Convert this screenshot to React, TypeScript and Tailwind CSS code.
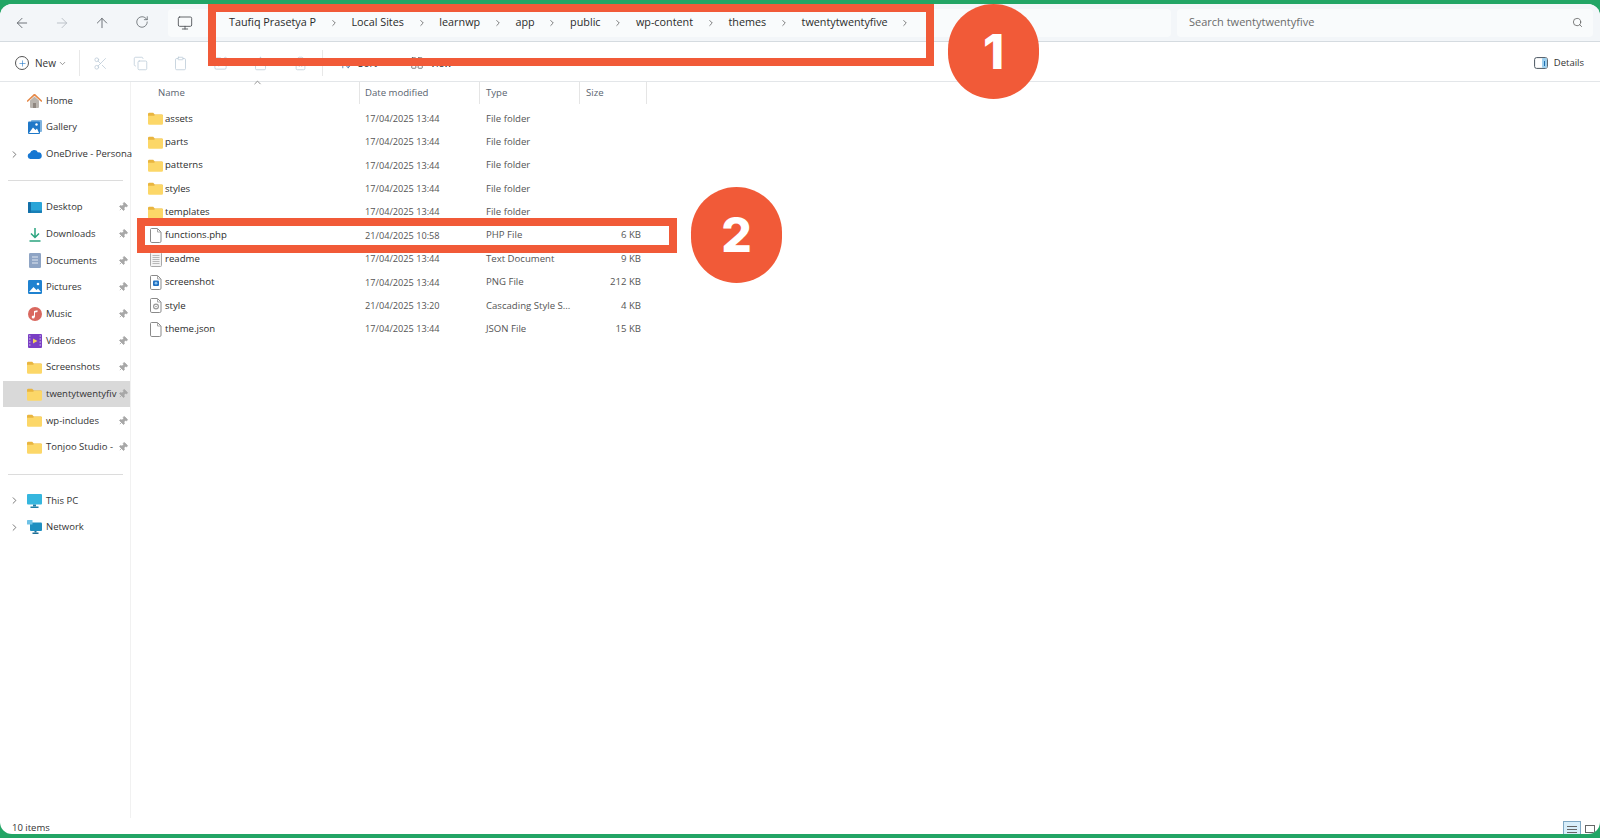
import {
  ArrowLeft,
  ArrowRight,
  ArrowUp,
  ArrowUpDown,
  ChevronDown,
  ChevronRight,
  ChevronUp,
  Clipboard,
  Copy,
  LayoutGrid,
  Monitor,
  Pin,
  Plus,
  RotateCw,
  Scissors,
  Search,
  Share,
  SquarePen,
  Trash2,
} from "lucide-react";
import React from "react";

const Folder = () => (
  <svg width="15" height="13" viewBox="0 0 15 13" className="shrink-0">
    <path d="M0 2a1.2 1.2 0 0 1 1.2-1.2h4l1.6 1.6h7A1.2 1.2 0 0 1 15 3.6V6H0z" fill="#e9b53f" />
    <path d="M0 3.8h6l1.4-1h6.4A1.2 1.2 0 0 1 15 4v7.6a1.2 1.2 0 0 1-1.2 1.2H1.2A1.2 1.2 0 0 1 0 11.6z" fill="#fcd768" />
  </svg>
);

const DocShell = ({ children }: { children?: React.ReactNode }) => (
  <svg width="14" height="15" viewBox="0 0 14 15" className="shrink-0">
    <path d="M2.5.5h6l3.5 3.5v9.2a1.3 1.3 0 0 1-1.3 1.3H2.8a1.3 1.3 0 0 1-1.3-1.3V1.5a1 1 0 0 1 1-1z" fill="#fff" stroke="#8a8a8a" />
    <path d="M8.5.5V4H12" fill="none" stroke="#a8a8a8" />
    {children}
  </svg>
);

const fileIcons: Record<string, React.ReactNode> = {
  folder: <Folder />,
  plain: <DocShell />,
  text: (
    <svg width="14" height="15" viewBox="0 0 14 15" className="shrink-0">
      <rect x="1.5" y=".5" width="11" height="14" rx="1" fill="#f3f3f3" stroke="#a8a8a8" />
      <path d="M3.5 3.5h7M3.5 5.5h7M3.5 7.5h7M3.5 9.5h7M3.5 11.5h7" stroke="#b8b8b8" />
    </svg>
  ),
  image: (
    <DocShell>
      <rect x="4" y="5.5" width="6" height="5.5" rx="1" fill="#1f6fc0" />
      <circle cx="7" cy="8.2" r="1.4" fill="#8cc4ee" />
    </DocShell>
  ),
  css: (
    <DocShell>
      <circle cx="7" cy="8.5" r="2.4" fill="none" stroke="#9a9a9a" strokeWidth="1.2" />
      <circle cx="7" cy="8.5" r=".8" fill="#9a9a9a" />
    </DocShell>
  ),
};

const Home = () => (
  <svg width="15" height="14" viewBox="0 0 15 14">
    <path d="M3 6.5V13a1 1 0 0 0 1 1h7a1 1 0 0 0 1-1V6.5L7.5 2.5z" fill="#b9b4ae" />
    <rect x="6" y="9" width="3" height="5" fill="#8f8780" />
    <path d="M.6 7 7.5.6 14.4 7" fill="none" stroke="#e68a4a" strokeWidth="1.7" strokeLinecap="round" />
  </svg>
);

const Gallery = () => (
  <svg width="14" height="14" viewBox="0 0 14 14">
    <rect x="3" y="0" width="11" height="12" rx="1" fill="#7fb3de" />
    <rect x="0" y="1.5" width="12" height="12.5" rx="1" fill="#1f78c8" />
    <path d="M1 13 5 7.5l2.500 2.500L9 8.500l2 4.500z" fill="#fff" />
    <circle cx="8.500" cy="4.500" r="1.200" fill="#fff" />
  </svg>
);

const Cloud = () => (
  <svg width="15" height="10" viewBox="0 0 15 10">
    <path d="M3.400 10A3 3 0 0 1 3 4.100 4.300 4.300 0 0 1 11 3.400 3.300 3.300 0 0 1 11.800 10z" fill="#1677d2" />
  </svg>
);

const Desktop = () => (
  <svg width="14" height="11" viewBox="0 0 14 11">
    <rect width="14" height="11" rx="1" fill="#2aa5d8" />
    <rect width="3" height="11" rx="1" fill="#136fa8" />
    <rect y="8.500" width="14" height="2.500" fill="#136fa8" opacity=".7" />
  </svg>
);

const Downloads = () => (
  <svg width="14" height="15" viewBox="0 0 14 15" fill="none" stroke="#2ba47f" strokeWidth="1.500">
    <path d="M7 1v9M3 6.500 7 10.500l4-4M1.500 14h11" />
  </svg>
);

const Documents = () => (
  <svg width="12" height="15" viewBox="0 0 12 15">
    <rect width="12" height="15" rx="1.200" fill="#8ea4c4" />
    <path d="M3 4h6M3 7h6M3 10h6" stroke="#dfe6f0" />
  </svg>
);

const Pictures = () => (
  <svg width="14" height="14" viewBox="0 0 14 14">
    <rect width="14" height="14" rx="1.200" fill="#1f82d0" />
    <path d="M1 12 5.500 7l3 3 1.500-1.500L13 12z" fill="#fff" />
    <circle cx="10" cy="4" r="1.300" fill="#fff" />
  </svg>
);

const Music = () => (
  <svg width="14" height="14" viewBox="0 0 14 14">
    <circle cx="7" cy="7" r="7" fill="#d9685f" />
    <path d="M6 10V4l3.500-.8V5L7 5.600V10z" fill="#fff" />
    <circle cx="5.200" cy="10" r="1.500" fill="#fff" />
  </svg>
);

const Videos = () => (
  <svg width="14" height="14" viewBox="0 0 14 14">
    <rect width="14" height="14" rx="1" fill="#7a3fc4" />
    <path d="M5 4.500v5l4.500-2.500z" fill="#f2d25c" />
    <path d="M1 2h1.500M1 5h1.500M1 8h1.500M1 11h1.500M11.500 2H13M11.500 5H13M11.500 8H13M11.500 11H13" stroke="#d5c2ee" />
  </svg>
);

const ThisPc = () => (
  <svg width="15" height="14" viewBox="0 0 15 14">
    <rect width="15" height="10.500" rx="1" fill="#35b6de" />
    <rect x="6" y="10.500" width="3" height="2" fill="#1f7ea6" />
    <rect x="3.500" y="12.500" width="8" height="1.500" fill="#1f7ea6" />
  </svg>
);

const Network = () => (
  <svg width="15" height="14" viewBox="0 0 15 14">
    <rect x="3" y="2.500" width="12" height="8.500" rx="1" fill="#1f8fc0" />
    <rect x="0" y="0" width="5.500" height="4.500" rx=".6" fill="#6fc2e6" />
    <rect x="7.500" y="11" width="2" height="1.500" fill="#1f6f96" />
    <rect x="5.500" y="12.500" width="6" height="1.500" fill="#1f6f96" />
  </svg>
);

type NavItem = { label?: string; icon?: React.ReactNode; pin?: boolean; arrow?: boolean; active?: boolean };

const sidebarItems: NavItem[] = [
  { label: "Home", icon: <Home /> },
  { label: "Gallery", icon: <Gallery /> },
  { label: "OneDrive - Persona", icon: <Cloud />, arrow: true },
  {},
  { label: "Desktop", icon: <Desktop />, pin: true },
  { label: "Downloads", icon: <Downloads />, pin: true },
  { label: "Documents", icon: <Documents />, pin: true },
  { label: "Pictures", icon: <Pictures />, pin: true },
  { label: "Music", icon: <Music />, pin: true },
  { label: "Videos", icon: <Videos />, pin: true },
  { label: "Screenshots", icon: <Folder />, pin: true },
  { label: "twentytwentyfiv", icon: <Folder />, pin: true, active: true },
  { label: "wp-includes", icon: <Folder />, pin: true },
  { label: "Tonjoo Studio -", icon: <Folder />, pin: true },
  {},
  { label: "This PC", icon: <ThisPc />, arrow: true },
  { label: "Network", icon: <Network />, arrow: true },
];

const files = [
  { name: "assets", date: "17/04/2025 13:44", type: "File folder", size: "", icon: "folder" },
  { name: "parts", date: "17/04/2025 13:44", type: "File folder", size: "", icon: "folder" },
  { name: "patterns", date: "17/04/2025 13:44", type: "File folder", size: "", icon: "folder" },
  { name: "styles", date: "17/04/2025 13:44", type: "File folder", size: "", icon: "folder" },
  { name: "templates", date: "17/04/2025 13:44", type: "File folder", size: "", icon: "folder" },
  { name: "functions.php", date: "21/04/2025 10:58", type: "PHP File", size: "6 KB", icon: "plain" },
  { name: "readme", date: "17/04/2025 13:44", type: "Text Document", size: "9 KB", icon: "text" },
  { name: "screenshot", date: "17/04/2025 13:44", type: "PNG File", size: "212 KB", icon: "image" },
  { name: "style", date: "21/04/2025 13:20", type: "Cascading Style S...", size: "4 KB", icon: "css" },
  { name: "theme.json", date: "17/04/2025 13:44", type: "JSON File", size: "15 KB", icon: "plain" },
];

const crumbs = ["Taufiq Prasetya P", "Local Sites", "learnwp", "app", "public", "wp-content", "themes", "twentytwentyfive"];

const NavBar = () => (
  <div className="flex h-[38px] shrink-0 items-center gap-[6px] border-b border-[#d5dbe0] bg-[#f3f6f9] pl-[2px] pr-[7px]">
    <div className="flex">
      <div className="flex w-10 justify-center text-[#5a6066]"><ArrowLeft size={16} strokeWidth={1.3} /></div>
      <div className="flex w-10 justify-center text-[#b4bac0]"><ArrowRight size={16} strokeWidth={1.3} /></div>
      <div className="flex w-10 justify-center text-[#5a6066]"><ArrowUp size={16} strokeWidth={1.3} /></div>
      <div className="flex w-10 justify-center text-[#5a6066]"><RotateCw size={14} strokeWidth={1.3} /></div>
    </div>
    <div className="flex h-[28px] flex-1 items-center rounded-[4px] bg-[#f9fbfc] pl-[9px]">
      <Monitor size={16} strokeWidth={1.3} className="text-[#4a4f54]" />
      <div className="ml-[36px] flex items-center gap-[12.7px] text-[10.8px] text-[#2b2b2b]">
        {crumbs.map((c) => (
          <React.Fragment key={c}>
            <span className="whitespace-nowrap">{c}</span>
            <ChevronRight size={10} strokeWidth={1.7} className="text-[#4a4a4a]" />
          </React.Fragment>
        ))}
      </div>
    </div>
    <div className="flex h-[28px] w-[416px] items-center justify-between rounded-[4px] bg-[#f9fbfc] pl-3 pr-[10px] text-[11px] text-[#6b6b6b]">
      <span>Search twentytwentyfive</span>
      <Search size={11} strokeWidth={1.6} className="text-[#555]" />
    </div>
  </div>
);

const CommandBar = () => (
  <div className="flex h-[40px] shrink-0 items-center border-b border-[#e3e6e9] bg-white pl-[15px] pr-4 pt-[3px] text-[10px] text-[#333]">
    <span className="flex h-[14px] w-[14px] items-center justify-center rounded-full border border-[#555]">
      <Plus size={9} strokeWidth={1.6} className="text-[#2277c7]" />
    </span>
    <span className="ml-[6px] w-[21px]">New</span>
    <ChevronDown size={9} className="ml-[2px] text-[#777]" />
    <div className="ml-[12px] h-[26px] w-px bg-[#e8e8e8]" />
    {[Scissors, Copy, Clipboard, SquarePen, Share, Trash2].map((Icon, i) => (
      <div key={i} className="flex w-10 justify-center text-[#b8c8d6]">
        <Icon size={15} strokeWidth={1.2} />
      </div>
    ))}
    <div className="ml-[2px] h-[26px] w-px bg-[#e8e8e8]" />
    <ArrowUpDown size={13} strokeWidth={1.4} className="ml-[16px] text-[#3a6ea5]" />
    <span className="ml-[6px] w-[20px]">Sort</span>
    <LayoutGrid size={14} strokeWidth={1.3} className="ml-[32px] text-[#555]" />
    <span className="ml-[6px]">View</span>
    <div className="ml-auto flex items-center gap-[6px]">
      <svg width="14" height="12" viewBox="0 0 14 12" fill="none">
        <rect x=".6" y=".6" width="12.8" height="10.800" rx="2" stroke="#4a5660" />
        <rect x="8" y="1" width="5" height="10" rx="1" fill="#9fd0ee" />
        <path d="M10.500 4v5" stroke="#1f6fb0" />
      </svg>
      <span className="text-[9.5px]">Details</span>
    </div>
  </div>
);

const Sidebar = () => (
  <div className="w-[131px] shrink-0 border-r border-[#f1f1f1] pl-[3px] pt-[5.5px] text-[9.5px] text-[#333]">
    {sidebarItems.map((item, i) =>
      item.label ? (
        <div key={i} className={`flex h-[26.67px] items-center ${item.active ? "bg-[#d9d9d9]" : ""}`}>
          <div className="flex w-[22px] shrink-0 justify-center text-[#555]">
            {item.arrow && <ChevronRight size={11} strokeWidth={1.7} />}
          </div>
          <div className="ml-[2px] flex w-[15px] shrink-0 justify-center">{item.icon}</div>
          <span className={`ml-1 whitespace-nowrap ${item.pin ? "w-[70px]" : "flex-1"}`}>{item.label}</span>
          {item.pin && <Pin size={10} className="ml-[2px] rotate-45 fill-[#a8a8a8] text-[#a8a8a8]" />}
        </div>
      ) : (
        <div key={i} className="flex h-[26.67px] items-center pl-[5px] pr-[7px]">
          <div className="h-px w-full bg-[#dcdcdc]" />
        </div>
      )
    )}
  </div>
);

const FileList = () => (
  <div className="relative flex-1 text-[9.6px]">
    <ChevronUp size={11} className="absolute left-[121px] top-[-5px] text-[#888]" />
    <div className="flex h-[25px] text-[#5a6470]">
      <div className="flex h-[22px] w-[229px] items-center border-r border-[#e5e5e5] pl-[27px]">Name</div>
      <div className="flex h-[22px] w-[120px] items-center border-r border-[#e5e5e5] pl-[5px]">Date modified</div>
      <div className="flex h-[22px] w-[100px] items-center border-r border-[#e5e5e5] pl-[6px]">Type</div>
      <div className="flex h-[22px] w-[67px] items-center border-r border-[#e5e5e5] pl-[6px]">Size</div>
    </div>
    {files.map((f) => (
      <div key={f.name} className="flex h-[23.4px] items-center pl-[17px]">
        <div className="flex w-[15px] shrink-0 justify-center">{fileIcons[f.icon]}</div>
        <span className="ml-px w-[201px] whitespace-nowrap pl-[1px] text-[#2b2b2b]">{f.name}</span>
        <span className="w-[121px] whitespace-nowrap text-[9.2px] text-[#555]">{f.date}</span>
        <span className="w-[100px] whitespace-nowrap text-[#555]">{f.type}</span>
        <span className="w-[55px] text-right text-[#555]">{f.size}</span>
      </div>
    ))}
  </div>
);

const StatusBar = () => (
  <div className="flex h-[16px] shrink-0 items-end justify-between pl-3 pr-[5px] text-[9.5px] leading-[13px] text-[#333]">
    <span>10 items</span>
    <div className="flex items-end gap-[4px]">
      <div className="flex h-[13px] w-[18px] flex-col items-center justify-end gap-[2px] border border-b-0 border-[#7fa8c4] bg-[#d8eefa] pb-[1px]">
        <div className="h-px w-[10px] bg-[#666]" />
        <div className="h-px w-[10px] bg-[#666]" />
        <div className="h-px w-[10px] bg-[#666]" />
      </div>
      <div className="mb-[1px] h-[8px] w-[10px] border border-[#666]" />
    </div>
  </div>
);

const Callout = ({ n, className }: { n: number; className: string }) => (
  <div className={`absolute flex items-center justify-center rounded-full bg-[#f15a38] font-['Inter',sans-serif] text-[48px] font-extrabold leading-none text-white ${className}`}>
    {n}
  </div>
);

export default function App() {
  return (
    <div className="relative h-[838px] w-[1600px] overflow-hidden bg-[#22a565] py-1 font-['Open_Sans',sans-serif]">
      <div className="flex h-full flex-col overflow-hidden rounded-[12px] bg-white">
        <NavBar />
        <CommandBar />
        <div className="flex min-h-0 flex-1">
          <Sidebar />
          <FileList />
        </div>
        <StatusBar />
      </div>
      {/* annotations on top of the screenshot */}
      <div className="absolute left-[208px] top-[4px] h-[62px] w-[726px] border-[8px] border-[#f15a38]" />
      <div className="absolute left-[137px] top-[218px] h-[35px] w-[540px] border-[8px] border-[#f15a38]" />
      <Callout n={1} className="left-[948px] top-[4px] h-[95px] w-[91px]" />
      <Callout n={2} className="left-[691px] top-[187px] h-[96px] w-[91px]" />
    </div>
  );
}
